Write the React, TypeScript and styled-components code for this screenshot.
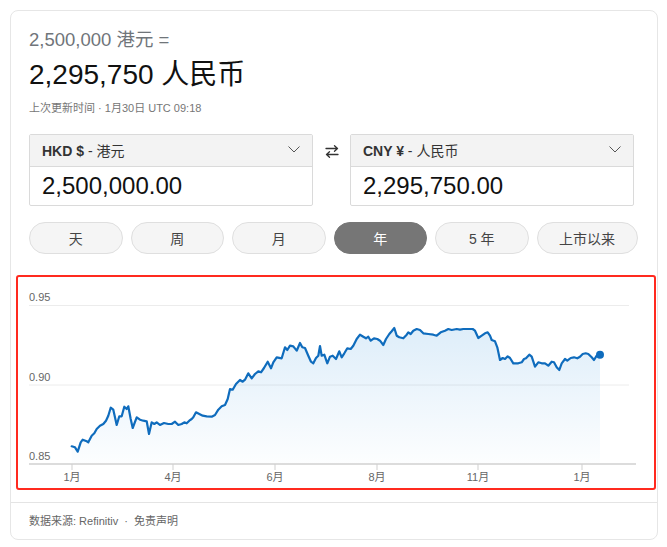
import React from "react";
import styled, { createGlobalStyle } from "styled-components";

const Global = createGlobalStyle`
  html, body { margin: 0; padding: 0; background: #fff; }
  body { font-family: "Liberation Sans", "Noto Sans CJK SC", Arial, sans-serif; }
  * { box-sizing: border-box; }
`;

const Card = styled.div`
  margin: 10px;
  width: 648px;
  border: 1px solid #e6e6e6;
  border-radius: 8px;
  background: #fff;
  overflow: hidden;
`;

const Body = styled.div`
  padding: 17px 23px 12px 18px;
  display: flex;
  flex-direction: column;
`;

const FromLine = styled.div`
  font-size: 18.5px;
  line-height: 24px;
  color: #70757a;
`;

const ToLine = styled.div`
  margin-top: 5px;
  font-size: 28px;
  line-height: 36px;
  color: #111;
`;

const Updated = styled.div`
  margin-top: 7px;
  font-size: 11px;
  line-height: 16px;
  color: #767676;
`;

const ConvRow = styled.div`
  margin-top: 18px;
  display: grid;
  grid-template-columns: 284px 37px 284px;
  align-items: start;
`;

const ConvBox = styled.div`
  border: 1px solid #dadada;
  border-radius: 2px;
  display: flex;
  flex-direction: column;
`;

const ConvHead = styled.div`
  height: 32px;
  background: #f3f3f3;
  border-bottom: 1px solid #dadada;
  display: flex;
  align-items: center;
  justify-content: space-between;
  padding: 0 12px 2px 12px;
  font-size: 14px;
  color: #333;
`;

const Code = styled.b`
  font-weight: 700;
`;

const ConvValue = styled.div`
  height: 38px;
  display: flex;
  align-items: center;
  padding: 0 12px;
  font-size: 24px;
  color: #111;
`;

const Swap = styled.div`
  height: 34px;
  display: flex;
  align-items: center;
  justify-content: center;
`;

const Pills = styled.div`
  margin-top: 16px;
  display: grid;
  grid-template-columns: repeat(5, 93.5px) 101px;
  column-gap: 8px;
`;

const Pill = styled.button<{ $active?: boolean }>`
  height: 32px;
  border-radius: 16px;
  border: 1px solid ${(p) => (p.$active ? "#767676" : "#dfdfdf")};
  background: ${(p) => (p.$active ? "#767676" : "#f5f5f5")};
  color: ${(p) => (p.$active ? "#fff" : "#444")};
  font-family: inherit;
  font-size: 14px;
  padding: 0;
  cursor: pointer;
`;

const Highlight = styled.div`
  margin: 21px -22px 0 -13px;
  height: 215px;
  border: 2px solid #ff2a1f;
  border-radius: 3px;
`;

const ChartSvg = styled.svg`
  display: block;
  font-family: "Liberation Sans", "Noto Sans CJK SC", Arial, sans-serif;
`;

const Footer = styled.div`
  border-top: 1px solid #e4e4e4;
  padding: 10px 18px 10px;
  font-size: 11px;
  line-height: 16px;
  color: #666;
`;

const Dot = styled.span`
  margin: 0 3px;
`;

const pts: [number, number][] = [
[71.7,447.3],[75,448.3],[77.7,452.7],[80.7,443.3],[82.7,440.7],[86.7,442.3],[88.3,443.3],[91.7,436.7],[94.3,434.3],[96.7,430],[100,426.7],[103.3,425],[106,421.7],[108.3,416.7],[110.7,408.7],[113.3,410.7],[116.7,426],[119.3,417.3],[121.7,417.3],[124.3,407.7],[126.7,410],[128.3,407.3],[130.7,420],[132.7,429],[136.7,418.3],[140,420.7],[143.3,421.7],[146.7,422.3],[149,435],[151.7,423.3],[154.3,425],[156.7,423.3],[160,426],[164,424],[168.3,425],[171.7,425],[175,422.7],[178.3,426],[181.7,425],[184.3,423.3],[186.7,424.3],[189.3,421.7],[191.7,420],[193.3,418.3],[196,413.3],[199.3,415],[202.7,416.7],[206.7,417.3],[211.7,417.7],[215,416],[218.3,410.7],[221.7,407.3],[225,406],[227.7,400],[230,390],[232.7,390.7],[236,385],[240,381],[242.7,382.7],[245,380.7],[248.3,374.3],[251.7,379.3],[255,375],[258.3,372.3],[261,373.3],[264,369],[267.7,362.7],[271,369.3],[273.3,363.3],[276.7,358.3],[281.7,359.3],[285,348.3],[287.3,351],[290,346.7],[293.3,347.3],[296.7,351.7],[300,344],[302.3,348.3],[305,349],[308.3,356.7],[311,362.7],[313.3,364.3],[316,359],[318.3,356.7],[320,347],[321.7,356.7],[324.3,355.7],[327.3,364.3],[330,357.7],[332.7,356.7],[336,360],[339.3,352.3],[341.7,358.3],[344.3,354.3],[347.3,349.3],[350.7,350],[353.3,346.7],[356.7,340],[360,335.7],[363.3,337.7],[366,339.3],[368.3,337.7],[370.7,341.7],[374,339.3],[377.3,340],[380,341.7],[383.3,346],[386,340],[389.3,335],[391.7,332.3],[394.3,329],[396.7,336.7],[399.3,338.3],[403.3,339.3],[406.7,335.7],[408.3,333.3],[410.7,335],[413.3,331.7],[416.7,330],[420,331],[423.3,334.3],[428.3,335],[433.3,335.7],[436.7,336.7],[440.7,333.3],[445,331.7],[448.3,330],[451.7,331],[456.7,330],[460,330.7],[463.3,330],[468.3,330],[472.7,330],[475,331.7],[478.3,339],[481.7,336.7],[485,334.3],[487.7,333.3],[490,336.7],[491.7,341],[495,342.3],[497.3,348.3],[500,361],[502.7,359],[505,360],[507.7,357.3],[510,359],[513.3,364.3],[518.3,364.3],[521.7,363.3],[524,360],[526,359.3],[529.3,355.7],[531.7,357.7],[535,367.7],[538.3,363.3],[541.7,364.3],[545,364.3],[548.3,366.7],[551.7,362.7],[554,363.3],[556.7,368.3],[559.3,371],[561.7,364.3],[565,360],[567.3,361.7],[570.7,359],[574,358.3],[577.3,359.3],[580,357.7],[582.7,355],[585.7,354.3],[588.3,355],[591.7,358.3],[594,361],[596.7,356.7],[600,355.7]
];

const yLabels = [
  { t: "0.95", y: 306.5 },
  { t: "0.90", y: 386 },
  { t: "0.85", y: 465 },
];
const xLabels = [
  { t: "1月", x: 72 },
  { t: "4月", x: 173 },
  { t: "6月", x: 275 },
  { t: "8月", x: 377 },
  { t: "11月", x: 478 },
  { t: "1月", x: 582 },
];

function Chart() {
  const line = pts.map((p, i) => `${i ? "L" : "M"}${p[0]},${p[1]}`).join(" ");
  const last = pts[pts.length - 1];
  const area = `${line} L${last[0]},464 L${pts[0][0]},464 Z`;
  return (
    <ChartSvg width={636} height={211} viewBox="18 278 636 211">
      <defs>
        <linearGradient id="fillG" x1="0" y1="0" x2="0" y2="1">
          <stop offset="0" stopColor="#0078d4" stopOpacity="0.13" />
          <stop offset="1" stopColor="#0078d4" stopOpacity="0.01" />
        </linearGradient>
      </defs>
      <line x1={29} x2={629} y1={306.5} y2={306.5} stroke="#ececec" strokeWidth={1} />
      <line x1={29} x2={629} y1={386} y2={386} stroke="#ececec" strokeWidth={1} />
      <path d={area} fill="url(#fillG)" />
      <line x1={29} x2={636} y1={465} y2={465} stroke="#dcdcdc" strokeWidth={2} />
      {xLabels.map((l, i) => (
        <line key={"t" + i} x1={l.x} x2={l.x} y1={465} y2={471} stroke="#cfcfcf" strokeWidth={1} />
      ))}
      {yLabels.map((l) => (
        <text key={l.t} x={29} y={l.y - 4.5} fontSize={11} fill="#666">
          {l.t}
        </text>
      ))}
      {xLabels.map((l, i) => (
        <text key={"x" + i} x={l.x} y={482} fontSize={11} fill="#666" textAnchor="middle">
          {l.t}
        </text>
      ))}
      <path d={line} fill="none" stroke="#0f6cbd" strokeWidth={2.2} strokeLinejoin="round" strokeLinecap="round" />
      <circle cx={last[0]} cy={last[1]} r={4} fill="#0f6cbd" />
    </ChartSvg>
  );
}

const Chevron = () => (
  <svg width="12" height="7" viewBox="0 0 12 7">
    <polyline points="0.5,0.5 6,6 11.5,0.5" fill="none" stroke="#555" strokeWidth="1" />
  </svg>
);

const SwapIcon = () => (
  <svg width="14" height="13" viewBox="0 0 14 13">
    <g fill="none" stroke="#333" strokeWidth="1.3" strokeLinecap="round" strokeLinejoin="round">
      <path d="M1 3.5 H12.5 M9.5 0.8 L12.5 3.5 L9.5 6.2" />
      <path d="M13 9.5 H1.5 M4.5 6.8 L1.5 9.5 L4.5 12.2" />
    </g>
  </svg>
);

const ranges = ["天", "周", "月", "年", "5 年", "上市以来"];

export default function App() {
  return (
    <>
      <Global />
      <Card>
        <Body>
          <FromLine>2,500,000 港元 =</FromLine>
          <ToLine>2,295,750 人民币</ToLine>
          <Updated>上次更新时间 · 1月30日 UTC 09:18</Updated>
          <ConvRow>
            <ConvBox>
              <ConvHead>
                <span>
                  <Code>HKD $</Code> - 港元
                </span>
                <Chevron />
              </ConvHead>
              <ConvValue>2,500,000.00</ConvValue>
            </ConvBox>
            <Swap>
              <SwapIcon />
            </Swap>
            <ConvBox>
              <ConvHead>
                <span>
                  <Code>CNY ¥</Code> - 人民币
                </span>
                <Chevron />
              </ConvHead>
              <ConvValue>2,295,750.00</ConvValue>
            </ConvBox>
          </ConvRow>
          <Pills>
            {ranges.map((r) => (
              <Pill key={r} $active={r === "年"}>
                {r}
              </Pill>
            ))}
          </Pills>
          <Highlight>
            <Chart />
          </Highlight>
        </Body>
        <Footer>
          数据来源: Refinitiv <Dot>·</Dot> 免责声明
        </Footer>
      </Card>
    </>
  );
}
